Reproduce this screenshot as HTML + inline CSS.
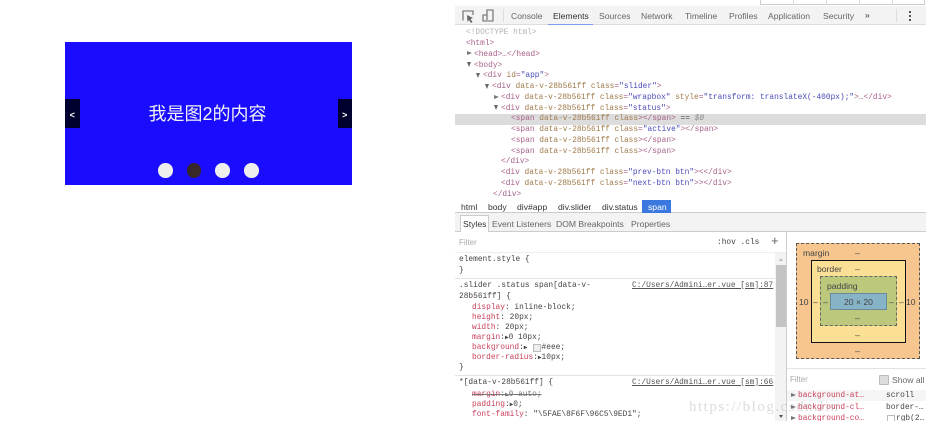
<!DOCTYPE html>
<html>
<head>
<meta charset="utf-8">
<style>
html,body{margin:0;padding:0;background:#fff;}
#r{position:relative;width:936px;height:427px;overflow:hidden;background:#fff;font-family:"Liberation Sans","Noto Sans CJK SC",sans-serif;filter:blur(0.35px);}
#r div{position:absolute;}
.m{font-family:"Liberation Mono",monospace;font-size:7.85px;line-height:11px;height:11px;white-space:pre;color:#444;}
.s{font-size:8.6px;line-height:12px;height:12px;white-space:pre;color:#666;}
.t{color:#a8608a}.a{color:#a07a4a}.v{color:#4a4ab8}.g{color:#b4b4b4}
.n{color:#c8405a}
.ar{width:0;height:0;border-top:2.5px solid transparent;border-bottom:2.5px solid transparent;border-left:5px solid #777;}
.ad{width:0;height:0;border-left:2.5px solid transparent;border-right:2.5px solid transparent;border-top:5px solid #666;}
.dot{width:14.5px;height:14.5px;border-radius:50%;background:#eee;top:163px;}
</style>
</head>
<body>
<div id="r">
<!-- slider -->
<div style="left:65px;top:42px;width:287px;height:143px;background:#1a0dff;"></div>
<div style="left:65px;top:99px;width:14.5px;height:29px;background:#00002e;"></div>
<div style="left:337.5px;top:99px;width:14.5px;height:29px;background:#00002e;"></div>
<div style="left:65px;top:108.5px;width:14.5px;text-align:center;color:#fff;font-size:9px;line-height:13px;font-weight:bold;">&lt;</div>
<div style="left:337.5px;top:108.5px;width:14.5px;text-align:center;color:#fff;font-size:9px;line-height:13px;font-weight:bold;">&gt;</div>
<div style="left:64px;top:101px;width:287px;text-align:center;color:#f2f2f2;font-size:18px;line-height:26px;white-space:nowrap;">我是图2的内容</div>
<div class="dot" style="left:158px;"></div>
<div class="dot" style="left:186.500px;background:#38282a;"></div>
<div class="dot" style="left:215px;"></div>
<div class="dot" style="left:244px;"></div>

<!-- top strip -->
<div style="left:760px;top:0;width:165px;height:5px;border:1px solid #ccc;border-top:0;box-sizing:border-box;"></div>
<div style="left:793px;top:0;width:1px;height:5px;background:#ddd;"></div>
<div style="left:826px;top:0;width:1px;height:5px;background:#ddd;"></div>
<div style="left:859px;top:0;width:1px;height:5px;background:#ddd;"></div>
<div style="left:892px;top:0;width:1px;height:5px;background:#ddd;"></div>

<!-- toolbar -->
<div style="left:455px;top:6px;width:471px;height:19px;background:#f3f3f3;border-bottom:1px solid #ddd;box-sizing:border-box;"></div>
<svg style="position:absolute;left:455px;top:6px;" width="50" height="19" viewBox="0 0 50 19"><path d="M8.5 14H8V5h10v4" fill="none" stroke="#666" stroke-width="1.1"/><path d="M12 9l6 3-2.500 1 2 3-1.500 1-2-3-1.500 2z" fill="#666"/><path d="M28 14V9h4V4h6v11H28zM32 9v5" fill="none" stroke="#666" stroke-width="1.1"/></svg>
<div style="left:503px;top:9px;width:1px;height:13px;background:#ddd;"></div>
<div class="s" style="left:511px;top:10px;">Console</div>
<div class="s" style="left:553px;top:10px;color:#333;">Elements</div>
<div style="left:548px;top:23.500px;width:45px;height:1.500px;background:#7a9df0;"></div>
<div class="s" style="left:599px;top:10px;">Sources</div>
<div class="s" style="left:641px;top:10px;">Network</div>
<div class="s" style="left:685px;top:10px;">Timeline</div>
<div class="s" style="left:729px;top:10px;">Profiles</div>
<div class="s" style="left:768px;top:10px;">Application</div>
<div class="s" style="left:823px;top:10px;">Security</div>
<div class="s" style="left:865px;top:9px;font-weight:bold;">»</div>
<div style="left:896px;top:9px;width:1px;height:13px;background:#ddd;"></div>
<div style="left:909px;top:11px;width:2px;height:2px;background:#555;"></div>
<div style="left:909px;top:15px;width:2px;height:2px;background:#555;"></div>
<div style="left:909px;top:19px;width:2px;height:2px;background:#555;"></div>

<!-- DOM tree -->
<div style="left:455px;top:113.500px;width:471px;height:11px;background:#dcdcdc;"></div>
<div class="m g" style="left:466px;top:27px;">&lt;!DOCTYPE html&gt;</div>
<div class="m t" style="left:466px;top:38px;">&lt;html&gt;</div>
<div class="ar" style="left:467px;top:51px;"></div>
<div class="m t" style="left:474px;top:48.500px;">&lt;head&gt;…&lt;/head&gt;</div>
<div class="ad" style="left:467px;top:62px;"></div>
<div class="m t" style="left:474px;top:59.500px;">&lt;body&gt;</div>
<div class="ad" style="left:476px;top:73px;"></div>
<div class="m t" style="left:483px;top:70px;">&lt;div <span class="a">id</span>=<span class="v">"app"</span>&gt;</div>
<div class="ad" style="left:485px;top:84px;"></div>
<div class="m t" style="left:492px;top:81px;">&lt;div <span class="a">data-v-28b561ff class</span>=<span class="v">"slider"</span>&gt;</div>
<div class="ar" style="left:494px;top:94.500px;"></div>
<div class="m t" style="left:501px;top:92px;">&lt;div <span class="a">data-v-28b561ff class</span>=<span class="v">"wrapbox"</span> <span class="a">style</span>=<span class="v">"transform: translateX(-400px);"</span>&gt;…&lt;/div&gt;</div>
<div class="ad" style="left:494px;top:105px;"></div>
<div class="m t" style="left:501px;top:102.500px;">&lt;div <span class="a">data-v-28b561ff class</span>=<span class="v">"status"</span>&gt;</div>
<div class="m t" style="left:511px;top:113px;">&lt;span <span class="a">data-v-28b561ff class</span>&gt;&lt;/span&gt; <span style="color:#555">==</span> <span style="color:#888;font-style:italic">$0</span></div>
<div class="m t" style="left:511px;top:124px;">&lt;span <span class="a">data-v-28b561ff class</span>=<span class="v">"active"</span>&gt;&lt;/span&gt;</div>
<div class="m t" style="left:511px;top:135px;">&lt;span <span class="a">data-v-28b561ff class</span>&gt;&lt;/span&gt;</div>
<div class="m t" style="left:511px;top:146px;">&lt;span <span class="a">data-v-28b561ff class</span>&gt;&lt;/span&gt;</div>
<div class="m t" style="left:501px;top:156px;">&lt;/div&gt;</div>
<div class="m t" style="left:501px;top:167px;">&lt;div <span class="a">data-v-28b561ff class</span>=<span class="v">"prev-btn btn"</span>&gt;&lt;&lt;/div&gt;</div>
<div class="m t" style="left:501px;top:178px;">&lt;div <span class="a">data-v-28b561ff class</span>=<span class="v">"next-btn btn"</span>&gt;&gt;&lt;/div&gt;</div>
<div class="m t" style="left:493px;top:189px;">&lt;/div&gt;</div>

<!-- breadcrumbs -->
<div style="left:455px;top:200px;width:471px;height:13px;background:#fff;border-bottom:1px solid #ccc;box-sizing:border-box;"></div>
<div style="left:642px;top:200px;width:29px;height:13px;background:#3a78e0;"></div>
<div class="s" style="left:461px;top:201px;color:#333;">html</div>
<div class="s" style="left:488px;top:201px;color:#333;">body</div>
<div class="s" style="left:517px;top:201px;color:#333;">div#app</div>
<div class="s" style="left:558px;top:201px;color:#333;">div.slider</div>
<div class="s" style="left:602px;top:201px;color:#333;">div.status</div>
<div class="s" style="left:648px;top:201px;color:#fff;">span</div>

<!-- sidebar tabs -->
<div style="left:455px;top:213px;width:471px;height:19px;background:#f3f3f3;border-bottom:1px solid #ccc;box-sizing:border-box;"></div>
<div style="left:460px;top:215px;width:29px;height:17px;background:#fff;border:1px solid #ccc;border-bottom:0;box-sizing:border-box;"></div>
<div class="s" style="left:463px;top:218px;color:#333;">Styles</div>
<div class="s" style="left:492px;top:218px;">Event Listeners</div>
<div class="s" style="left:556px;top:218px;">DOM Breakpoints</div>
<div class="s" style="left:631px;top:218px;">Properties</div>

<!-- styles pane -->
<div style="left:455px;top:252px;width:331px;height:1px;background:#eee;"></div>
<div class="s" style="left:459px;top:237px;color:#aaa;font-size:8px;">Filter</div>
<div class="m" style="left:717px;top:237px;">:hov .cls</div>
<div class="s" style="left:771px;top:235px;font-size:13px;">+</div>
<div style="left:786px;top:232px;width:1px;height:195px;background:#ccc;"></div>
<div style="left:775px;top:253px;width:11px;height:169px;background:#f3f3f3;"></div>
<div style="left:776px;top:265px;width:10px;height:62px;background:#c4c4c4;"></div>
<div style="left:778.500px;top:258px;width:0;height:0;border-left:2.500px solid transparent;border-right:2.500px solid transparent;border-bottom:3px solid #bbb;"></div>
<div style="left:778.500px;top:415px;width:0;height:0;border-left:2.500px solid transparent;border-right:2.500px solid transparent;border-top:3px solid #555;"></div>

<div class="m" style="left:459px;top:254px;">element.style {</div>
<div class="m" style="left:459px;top:265px;">}</div>
<div style="left:455px;top:278px;width:320px;height:1px;background:#e4e4e4;"></div>
<div class="m" style="left:459px;top:280px;">.slider .status span[data-v-</div>
<div class="m" style="left:459px;top:291px;">28b561ff] {</div>
<div class="m" style="left:632px;top:280px;color:#555;text-decoration:underline;">C:/Users/Admini…er.vue [sm]:87</div>
<div class="m" style="left:472px;top:302px;"><span class="n">display</span>: inline-block;</div>
<div class="m" style="left:472px;top:312px;"><span class="n">height</span>: 20px;</div>
<div class="m" style="left:472px;top:322px;"><span class="n">width</span>: 20px;</div>
<div class="m" style="left:472px;top:332px;"><span class="n">margin</span>:<span style="font-size:6px">▶</span>0 10px;</div>
<div class="m" style="left:472px;top:342px;"><span class="n">background</span>:<span style="font-size:6px">▶</span>   #eee;</div>
<div style="left:533px;top:344px;width:6px;height:6px;background:#eee;border:1px solid #bbb;"></div>
<div class="m" style="left:472px;top:352px;"><span class="n">border-radius</span>:<span style="font-size:6px">▶</span>10px;</div>
<div class="m" style="left:459px;top:362px;">}</div>
<div style="left:455px;top:375px;width:320px;height:1px;background:#e4e4e4;"></div>
<div class="m" style="left:459px;top:377px;">*[data-v-28b561ff] {</div>
<div class="m" style="left:632px;top:377px;color:#555;text-decoration:underline;">C:/Users/Admini…er.vue [sm]:66</div>
<div class="m" style="left:472px;top:389px;color:#777;text-decoration:line-through;"><span class="n">margin</span>:<span style="font-size:6px">▶</span>0 auto;</div>
<div class="m" style="left:472px;top:399px;"><span class="n">padding</span>:<span style="font-size:6px">▶</span>0;</div>
<div class="m" style="left:472px;top:409px;"><span class="n">font-family</span>: "\5FAE\8F6F\96C5\9ED1";</div>

<!-- box model -->
<div style="left:787px;top:232px;width:139px;height:136px;background:#fff;"></div>
<div style="left:796px;top:243px;width:124px;height:116px;background:#f6c68e;border:1px dashed #555;box-sizing:border-box;"></div>
<div style="left:811px;top:260px;width:95px;height:83px;background:#fbdf94;border:1px solid #111;box-sizing:border-box;"></div>
<div style="left:820px;top:276px;width:77px;height:50px;background:#bcc97c;border:1px dashed #666;box-sizing:border-box;"></div>
<div style="left:830px;top:293px;width:57px;height:17px;background:#87b3c6;border:1px solid #6a8a9a;box-sizing:border-box;"></div>
<div class="s" style="left:803px;top:247px;color:#444;">margin</div>
<div class="s" style="left:817px;top:263px;color:#444;">border</div>
<div class="s" style="left:827px;top:280px;color:#444;">padding</div>
<div class="s" style="left:830px;top:296px;width:57px;text-align:center;color:#444;">20 × 20</div>
<div class="s" style="left:799px;top:296px;color:#444;">10</div>
<div class="s" style="left:906px;top:296px;color:#444;">10</div>
<div class="s" style="left:855px;top:247px;color:#444;">‒</div>
<div class="s" style="left:855px;top:263px;color:#444;">‒</div>
<div class="s" style="left:855px;top:312px;color:#444;">‒</div>
<div class="s" style="left:855px;top:329px;color:#444;">‒</div>
<div class="s" style="left:855px;top:345px;color:#444;">‒</div>
<div class="s" style="left:813px;top:296px;color:#444;">‒</div>
<div class="s" style="left:823px;top:296px;color:#444;">‒</div>
<div class="s" style="left:889px;top:296px;color:#444;">‒</div>
<div class="s" style="left:899px;top:296px;color:#444;">‒</div>

<!-- computed -->
<div style="left:787px;top:368px;width:139px;height:1px;background:#e4e4e4;"></div>
<div class="s" style="left:790px;top:374px;color:#aaa;font-size:8px;">Filter</div>
<div style="left:879px;top:375px;width:8px;height:8px;background:#ddd;border:1px solid #bbb;border-radius:1px;"></div>
<div class="s" style="left:892px;top:374px;">Show all</div>
<div style="left:787px;top:390px;width:139px;height:11px;background:#f5f5f5;"></div>
<div class="ar" style="left:791px;top:393px;"></div>
<div class="m n" style="left:798px;top:390px;">background-at…</div>
<div class="m" style="left:886px;top:390px;">scroll</div>
<div class="ar" style="left:791px;top:405px;"></div>
<div class="m n" style="left:798px;top:402px;">background-cl…</div>
<div class="m" style="left:886px;top:402px;">border-…</div>
<div class="ar" style="left:791px;top:416px;"></div>
<div class="m n" style="left:798px;top:413px;">background-co…</div>
<div style="left:887px;top:415px;width:6px;height:6px;background:#fff;border:1px solid #bbb;"></div>
<div class="m" style="left:896px;top:413px;">rgb(2…</div>

<!-- watermark -->
<div style="left:689px;top:399px;font-family:'Liberation Serif',serif;font-size:15px;line-height:16px;letter-spacing:1.5px;color:rgba(130,130,130,.28);white-space:pre;">https://blog.csdn.lin</div>
<div style="left:0;top:421px;width:936px;height:6px;background:#fff;"></div>
</div>
</body>
</html>
